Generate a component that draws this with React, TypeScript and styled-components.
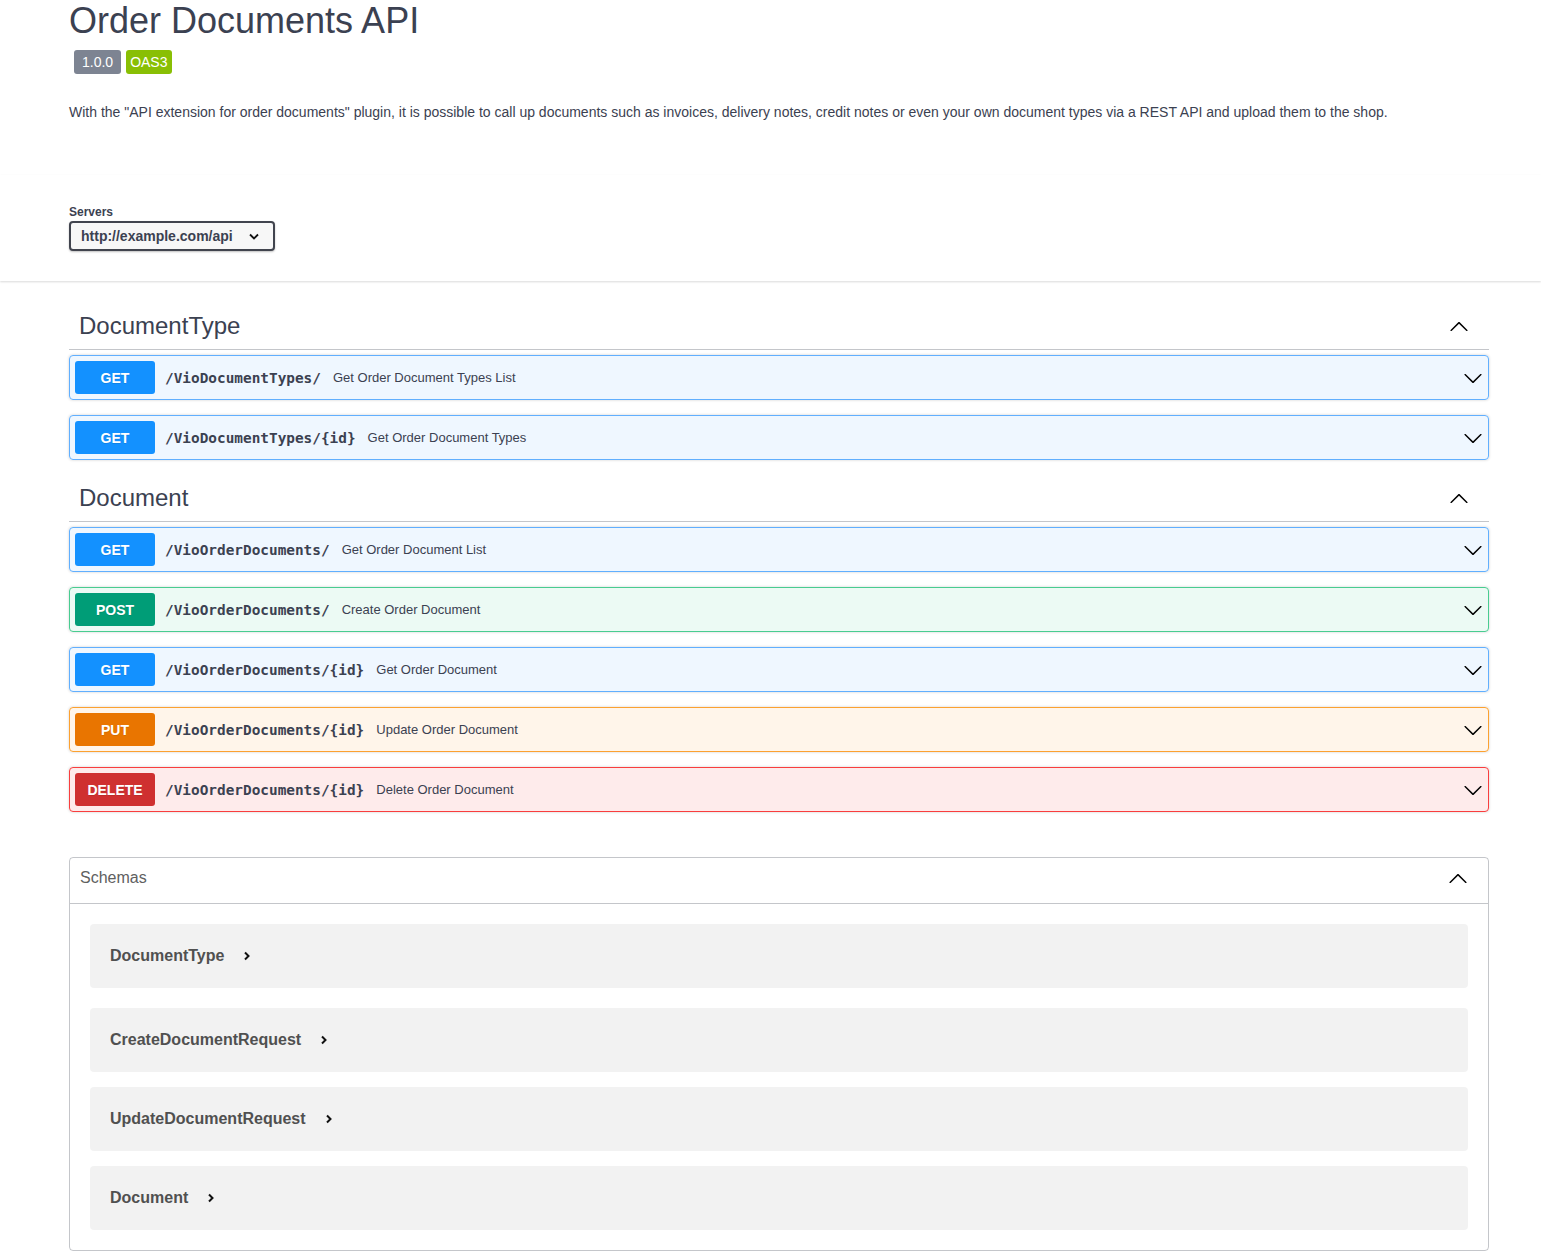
import React from "react";
import styled, { createGlobalStyle } from "styled-components";

const Global = createGlobalStyle`
  html, body { margin: 0; padding: 0; background: #fff; }
  body { font-family: "Liberation Sans", Arial, sans-serif; color: #3b4151; }
  * { box-sizing: border-box; }
`;

const Page = styled.div`
  width: 1541px;
`;

const Wrapper = styled.div`
  width: 1420px;
  margin-left: 69px;
`;

const Info = styled.div`
  padding-bottom: 52px;
`;

const Title = styled.h2`
  margin: 0;
  font-size: 36px;
  font-weight: 400;
  line-height: 41px;
  color: #3b4151;
`;

const Badges = styled.div`
  display: flex;
  gap: 5px;
  margin: 9px 0 0 5px;
`;

const Badge = styled.span<{ $bg: string; $px: number }>`
  background: ${(p) => p.$bg};
  color: #fff;
  font-size: 14px;
  line-height: 16px;
  padding: 4px ${(p) => p.$px}px;
  border-radius: 3px;
`;

const Description = styled.p`
  margin: 28px 0 0;
  font-size: 14px;
  line-height: 21px;
  color: #3b4151;
`;

const SchemeContainer = styled.div`
  background: #fff;
  box-shadow: 0 1px 2px 0 rgba(0, 0, 0, 0.15);
  padding: 30px 0;
`;

const ServersLabel = styled.div`
  font-size: 12px;
  font-weight: 700;
  line-height: 14px;
  margin-bottom: 2px;
  color: #3b4151;
`;

const Select = styled.div`
  display: inline-flex;
  align-items: center;
  width: 206px;
  height: 30px;
  padding: 0 10px;
  border: 2px solid #41444e;
  border-radius: 4px;
  background: #f7f7f7;
  box-shadow: 0 1px 2px 0 rgba(0, 0, 0, 0.25);
  font-size: 14px;
  font-weight: 700;
  color: #3b4151;
  gap: 16px;
`;

const Section = styled.div`
  margin-top: 22px;
`;

const TagHeader = styled.div`
  display: flex;
  align-items: center;
  justify-content: space-between;
  padding: 0 20px 1px 10px;
  height: 47px;
  border-bottom: 1px solid rgba(59, 65, 81, 0.3);
  margin-bottom: 5px;
  font-size: 24px;
  color: #3b4151;
`;

const Opblock = styled.div<{ $c: string; $bg: string }>`
  display: flex;
  align-items: center;
  height: 45px;
  padding: 0 5px;
  border: 1px solid ${(p) => p.$c};
  background: ${(p) => p.$bg};
  border-radius: 4px;
  box-shadow: 0 0 3px rgba(0, 0, 0, 0.19);
  margin-bottom: 15px;
`;

const Method = styled.span<{ $c: string }>`
  width: 80px;
  height: 33px;
  display: flex;
  align-items: center;
  justify-content: center;
  background: ${(p) => p.$c};
  border-radius: 3px;
  color: #fff;
  font-size: 14px;
  font-weight: 700;
  text-shadow: 0 1px 0 rgba(0, 0, 0, 0.1);
`;

const Path = styled.span`
  font-family: "DejaVu Sans Mono", "Liberation Mono", monospace;
  font-size: 14.4px;
  font-weight: 700;
  color: #3b4151;
  padding: 0 12px 0 10px;
`;

const Desc = styled.span`
  flex: 1;
  font-size: 13px;
  color: #3b4151;
`;

const ArrowBox = styled.span`
  display: flex;
  width: 20px;
  height: 20px;
`;

const Models = styled.div`
  margin: 45px 0 0;
  border: 1px solid rgba(59, 65, 81, 0.3);
  border-radius: 4px;
  padding-bottom: 20px;
`;

const ModelsHeader = styled.div`
  display: flex;
  align-items: center;
  justify-content: space-between;
  height: 46px;
  padding: 0 20px 5px 10px;
  border-bottom: 1px solid rgba(59, 65, 81, 0.3);
  font-size: 16px;
  color: #606060;
`;

const ModelList = styled.div`
  display: flex;
  flex-direction: column;
  gap: 15px;
  padding: 20px 20px 0;
`;

const ModelBox = styled.div<{ $first?: boolean }>`
  display: flex;
  align-items: center;
  height: 64px;
  padding: 0 20px;
  background: rgba(0, 0, 0, 0.05);
  border-radius: 4px;
  margin-bottom: ${(p) => (p.$first ? "5px" : "0")};
  font-size: 16px;
  font-weight: 700;
  color: #505050;
  gap: 19px;
`;

const ArrowDown = () => (
  <svg width="20" height="20" viewBox="0 0 20 20">
    <path
      d="M17.418 6.109c.272-.268.709-.268.979 0s.271.701 0 .969l-7.908 7.83c-.27.268-.707.268-.979 0l-7.908-7.83c-.27-.268-.27-.701 0-.969.271-.268.709-.268.979 0L10 13.25l7.418-7.141z"
      fill="#000"
    />
  </svg>
);

const ArrowUp = () => (
  <svg width="20" height="20" viewBox="0 0 20 20">
    <path
      d="M17.418 14.908c.272.268.709.268.979 0s.271-.701 0-.969l-7.908-7.83c-.27-.268-.707-.268-.979 0l-7.908 7.83c-.27.268-.27.701 0 .969.271.268.709.268.979 0L10 7.767l7.418 7.141z"
      fill="#000"
    />
  </svg>
);

const SmallChevron = () => (
  <svg width="8" height="10" viewBox="0 0 8 10">
    <path d="M2 1.5 L5.5 5 L2 8.5" stroke="#111" strokeWidth="2" fill="none" />
  </svg>
);

const SelectChevron = () => (
  <svg width="10" height="7" viewBox="0 0 10 7">
    <path d="M1 1.5 L5 5.5 L9 1.5" stroke="#111" strokeWidth="1.8" fill="none" />
  </svg>
);

const colors: Record<string, { c: string; border: string; bg: string }> = {
  GET: { c: "#1391ff", border: "#61affe", bg: "rgba(97,175,254,.1)" },
  POST: { c: "#009d77", border: "#49cc90", bg: "rgba(73,204,144,.1)" },
  PUT: { c: "#e97500", border: "#fca130", bg: "rgba(252,161,48,.1)" },
  DELETE: { c: "#cf3030", border: "#f93e3e", bg: "rgba(249,62,62,.1)" },
};

type Op = { m: string; path: string; desc: string };

const Operation = ({ m, path, desc }: Op) => {
  const col = colors[m];
  return (
    <Opblock $c={col.border} $bg={col.bg}>
      <Method $c={col.c}>{m}</Method>
      <Path>{path}</Path>
      <Desc>{desc}</Desc>
      <ArrowBox>
        <ArrowDown />
      </ArrowBox>
    </Opblock>
  );
};

const docTypeOps: Op[] = [
  { m: "GET", path: "/VioDocumentTypes/", desc: "Get Order Document Types List" },
  { m: "GET", path: "/VioDocumentTypes/{id}", desc: "Get Order Document Types" },
];

const docOps: Op[] = [
  { m: "GET", path: "/VioOrderDocuments/", desc: "Get Order Document List" },
  { m: "POST", path: "/VioOrderDocuments/", desc: "Create Order Document" },
  { m: "GET", path: "/VioOrderDocuments/{id}", desc: "Get Order Document" },
  { m: "PUT", path: "/VioOrderDocuments/{id}", desc: "Update Order Document" },
  { m: "DELETE", path: "/VioOrderDocuments/{id}", desc: "Delete Order Document" },
];

const schemas = ["DocumentType", "CreateDocumentRequest", "UpdateDocumentRequest", "Document"];

export default function App() {
  return (
    <Page>
      <Global />
      <Wrapper>
        <Info>
          <Title>Order Documents API</Title>
          <Badges>
            <Badge $bg="#7d8492" $px={8}>1.0.0</Badge>
            <Badge $bg="#89bf04" $px={4}>OAS3</Badge>
          </Badges>
          <Description>
            With the "API extension for order documents" plugin, it is possible to call up documents such as
            invoices, delivery notes, credit notes or even your own document types via a REST API and upload them to
            the shop.
          </Description>
        </Info>
      </Wrapper>
      <SchemeContainer>
        <Wrapper>
          <ServersLabel>Servers</ServersLabel>
          <Select>
            <span>http://example.com/api</span>
            <SelectChevron />
          </Select>
        </Wrapper>
      </SchemeContainer>
      <Wrapper>
        <Section>
          <TagHeader>
            <span>DocumentType</span>
            <ArrowUp />
          </TagHeader>
          {docTypeOps.map((o, i) => (
            <Operation key={i} {...o} />
          ))}
          <TagHeader>
            <span>Document</span>
            <ArrowUp />
          </TagHeader>
          {docOps.map((o, i) => (
            <Operation key={i} {...o} />
          ))}
        </Section>
        <Models>
          <ModelsHeader>
            <span>Schemas</span>
            <ArrowUp />
          </ModelsHeader>
          <ModelList>
            {schemas.map((s, i) => (
              <ModelBox key={s} $first={i === 0}>
                <span>{s}</span>
                <SmallChevron />
              </ModelBox>
            ))}
          </ModelList>
        </Models>
      </Wrapper>
    </Page>
  );
}
